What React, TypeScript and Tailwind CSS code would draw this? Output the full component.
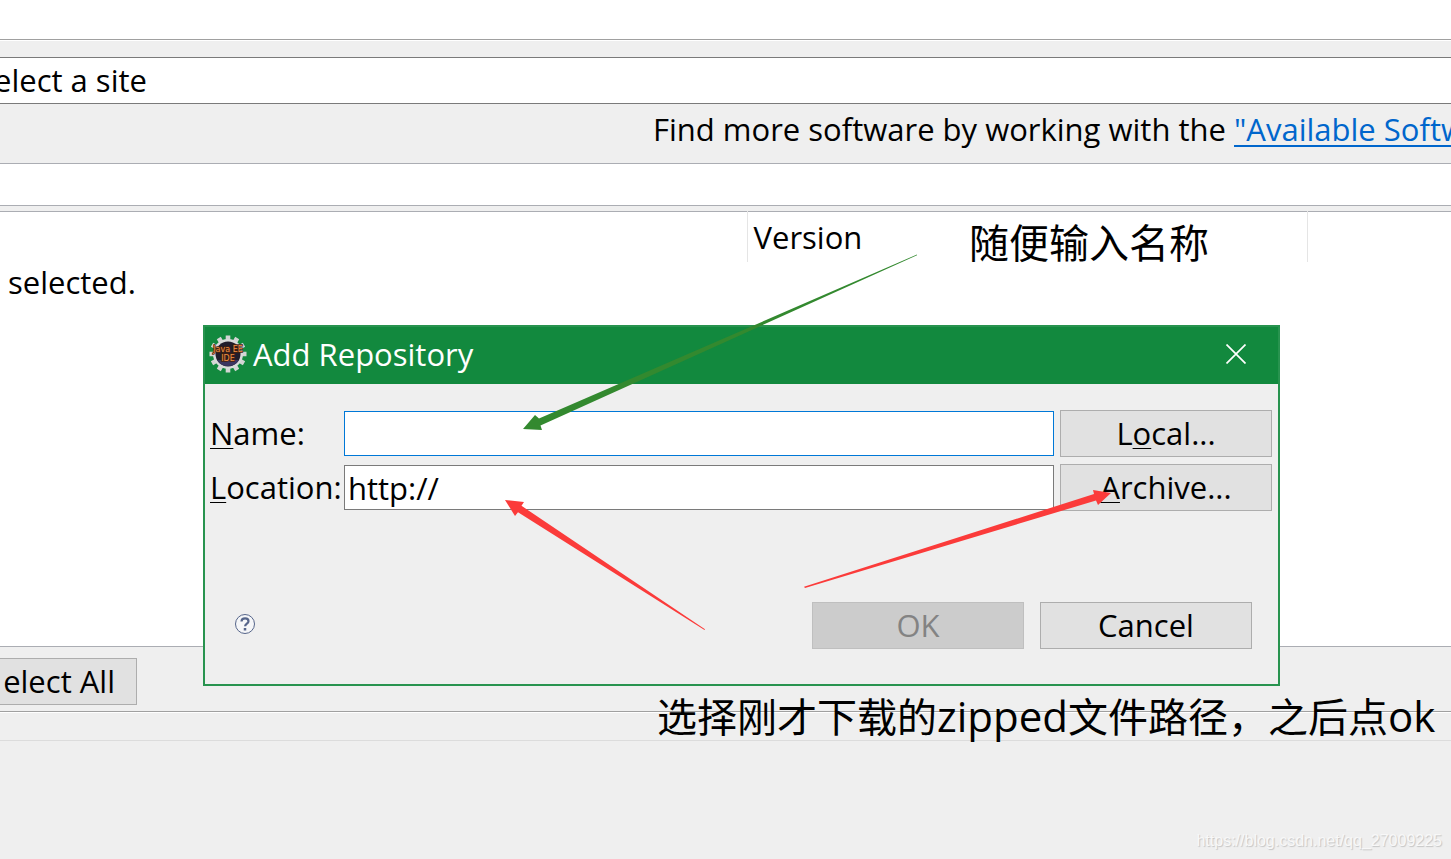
/**
 * Install dialog with the Add Repository window on top
 */

import type { ReactNode } from 'react';

const buttonClass = 'h-[47px] w-[212px] shrink-0 border border-[#adadad] bg-[#e1e1e1] text-center leading-[45px]';
const fieldClass = 'h-[45px] w-full min-w-0 border bg-white px-[3px] leading-10 outline-none';

function GearIcon() {
  return (
    <svg viewBox="0 0 38 38" className="h-[38px] w-[38px] shrink-0" aria-hidden="true">
      {/* 12 teeth */}
      <g stroke="#d3d5d4" strokeWidth="4.6">
        <path d="M19 .5v37M.5 19h37" />
        <path d="M9.8 3l18.4 32M28.2 3L9.8 35M3 9.8l32 18.4M35 9.8L3 28.2" />
      </g>
      <circle cx="19" cy="19" r="15" fill="#d9dbda" />
      <circle cx="19" cy="19" r="12.5" fill="#211d2b" />
      <path d="M8 25a12 10 0 0 0 22 0z" fill="#3b3560" />
      <g
        fill="#ee9048"
        stroke="#46200c"
        strokeWidth="1.5"
        paintOrder="stroke"
        fontFamily="DejaVu Sans"
        fontSize="8"
        textAnchor="middle"
      >
        <text x="19" y="17">Java EE</text>
        <text x="19" y="26">IDE</text>
      </g>
    </svg>
  );
}

// Underlined access key of a label
function Key({ children }: { children: ReactNode }) {
  return <span className="underline decoration-1 underline-offset-3">{children}</span>;
}

function FormRow({ id, label, children }: { id: string; label: ReactNode; children: ReactNode }) {
  return (
    <div className="flex items-center">
      <label htmlFor={id} className="w-[134px] shrink-0 pb-[2px] whitespace-nowrap">
        {label}
      </label>
      {children}
    </div>
  );
}

function AddRepositoryDialog() {
  return (
    <section
      role="dialog"
      aria-label="Add Repository"
      className="absolute top-[325px] right-[171px] left-[203px] border-2 border-[#28934f] bg-[#efefef]"
    >
      {/* Title bar */}
      <header className="flex h-[57px] items-center bg-[#12893e] pr-8 pb-[3px] pl-1 text-white">
        <GearIcon />
        <h1 className="ml-[6px] flex-1">Add Repository</h1>
        <button aria-label="Close">
          <svg viewBox="0 0 20 20" className="h-5 w-5" fill="none" stroke="currentColor" strokeWidth="1.7">
            <path d="M.5.5l19 19M19.5.5l-19 19" />
          </svg>
        </button>
      </header>

      {/* Form */}
      <div className="flex flex-col gap-[7px] pt-[26px] pr-[6px] pl-[5px]">
        <FormRow id="name" label={<><Key>N</Key>ame:</>}>
          <input id="name" className={`${fieldClass} border-[#0078d7]`} />
          <button className={`${buttonClass} ml-[6px]`}>L<Key>o</Key>cal...</button>
        </FormRow>
        <FormRow id="location" label={<><Key>L</Key>ocation:</>}>
          <input id="location" defaultValue="http://" className={`${fieldClass} border-[#7a7a7a]`} />
          <button className={`${buttonClass} ml-[6px]`}><Key>A</Key>rchive...</button>
        </FormRow>
      </div>

      {/* Footer */}
      <footer className="flex items-center gap-4 pt-[91px] pr-[26px] pb-[35px] pl-[29px]">
        <button aria-label="Help" className="mr-auto pb-1">
          <svg viewBox="0 0 22 22" className="h-[22px] w-[22px]" fill="none" stroke="#56658a">
            <circle cx="11" cy="11" r="9.5" fill="#f5f6f8" />
            <path d="M7.5 8.5c0-2.3 1.6-3.2 3.6-3.2s3.4 1 3.4 2.9c0 2.3-3.4 2.5-3.4 5" strokeWidth="2.2" />
            <path d="M11 15v2.5" strokeWidth="2.5" />
          </svg>
        </button>
        <button disabled className="h-[47px] w-[212px] border border-[#bfbfbf] bg-[#cccccc] leading-[45px] text-[#838383]">
          OK
        </button>
        <button className={buttonClass}>Cancel</button>
      </footer>
    </section>
  );
}

function Arrows() {
  return (
    <svg viewBox="0 0 1451 859" className="pointer-events-none absolute top-0 left-0 h-[859px] w-[1451px]" aria-hidden="true">
      <path d="M917 254.500L539 418.500L535 415L523 429L542 430L540.500 425.500L917 255.200z" fill="#33892f" />
      <path d="M705 629.200L521.500 505.800L524 502L505 500L515 516L518 512.300L704.500 630z" fill="#fb3b3a" />
      <path d="M804 586.800L1094 494L1093 490L1111 493L1098 505L1096 500.500L805 588z" fill="#fb3b3a" />
    </svg>
  );
}

export default function App() {
  return (
    <div className="relative min-h-screen overflow-hidden bg-[#efefef] font-['Open_Sans','Noto_Sans_CJK_SC',sans-serif] text-[31px] leading-10 text-black">
      <div className="h-10 border-b border-[#a0a0a0] bg-white" />

      {/* Work with */}
      <div className="border-t border-white pt-4">
        <div className="h-[47px] border-y border-[#7a7a7a] bg-white">
          <input aria-label="Work with" defaultValue="elect a site" className="-ml-[6px] block h-[43px] w-full outline-none" />
        </div>
      </div>
      <p className="flex h-[59px] justify-end overflow-hidden pt-[5px] whitespace-nowrap">
        <span className="w-[798px] shrink-0">
          Find more software by working with the{' '}
          <a href="#sites" className="text-[#0066cc] underline decoration-2 underline-offset-4">"Available Software Sites"</a>
        </span>
      </p>
      <input aria-label="Filter" className="block h-[43px] w-full border-y border-[#abadb3] bg-white outline-none" />

      {/* Available items */}
      <table className="mt-[5px] h-[436px] w-full table-fixed border-y border-[#abadb3] bg-white text-left">
        <thead>
          <tr className="h-[50px]">
            <th className="w-[747px] border-r border-[#e5e5e5]" />
            <th className="w-[560px] border-r border-[#e5e5e5] pl-[6px] font-normal">Version</th>
            <th />
          </tr>
        </thead>
        <tbody>
          <tr>
            <td colSpan={3} className="pl-2 align-top">selected.</td>
          </tr>
        </tbody>
      </table>

      <div className="h-[65px] border-b border-[#a0a0a0] pt-[11px]">
        <button className="block h-[47px] w-[137px] border border-l-0 border-[#adadad] bg-[#e1e1e1] pr-[21px] text-right leading-[45px]">
          elect All
        </button>
      </div>
      <div className="h-[29px] border-t border-b border-t-white border-b-[#dcdcdc]" />

      <AddRepositoryDialog />

      {/* Notes */}
      <p className="absolute top-[213px] left-[969px] text-[40px] leading-[60px] whitespace-nowrap">随便输入名称</p>
      <p className="absolute top-[686px] left-[657px] text-[40px] leading-[60px] whitespace-nowrap">
        选择刚才下载的<span className="text-[42px]">zipped</span>文件路径，之后点<span className="text-[42px]">ok</span>
      </p>
      <Arrows />
      <p className="absolute right-[9px] bottom-2 font-['Liberation_Sans'] text-base leading-5 text-[#f8f8f8] [text-shadow:1px_1px_1px_#c4c4c4]">
        https://blog.csdn.net/qq_27009225
      </p>
    </div>
  );
}
